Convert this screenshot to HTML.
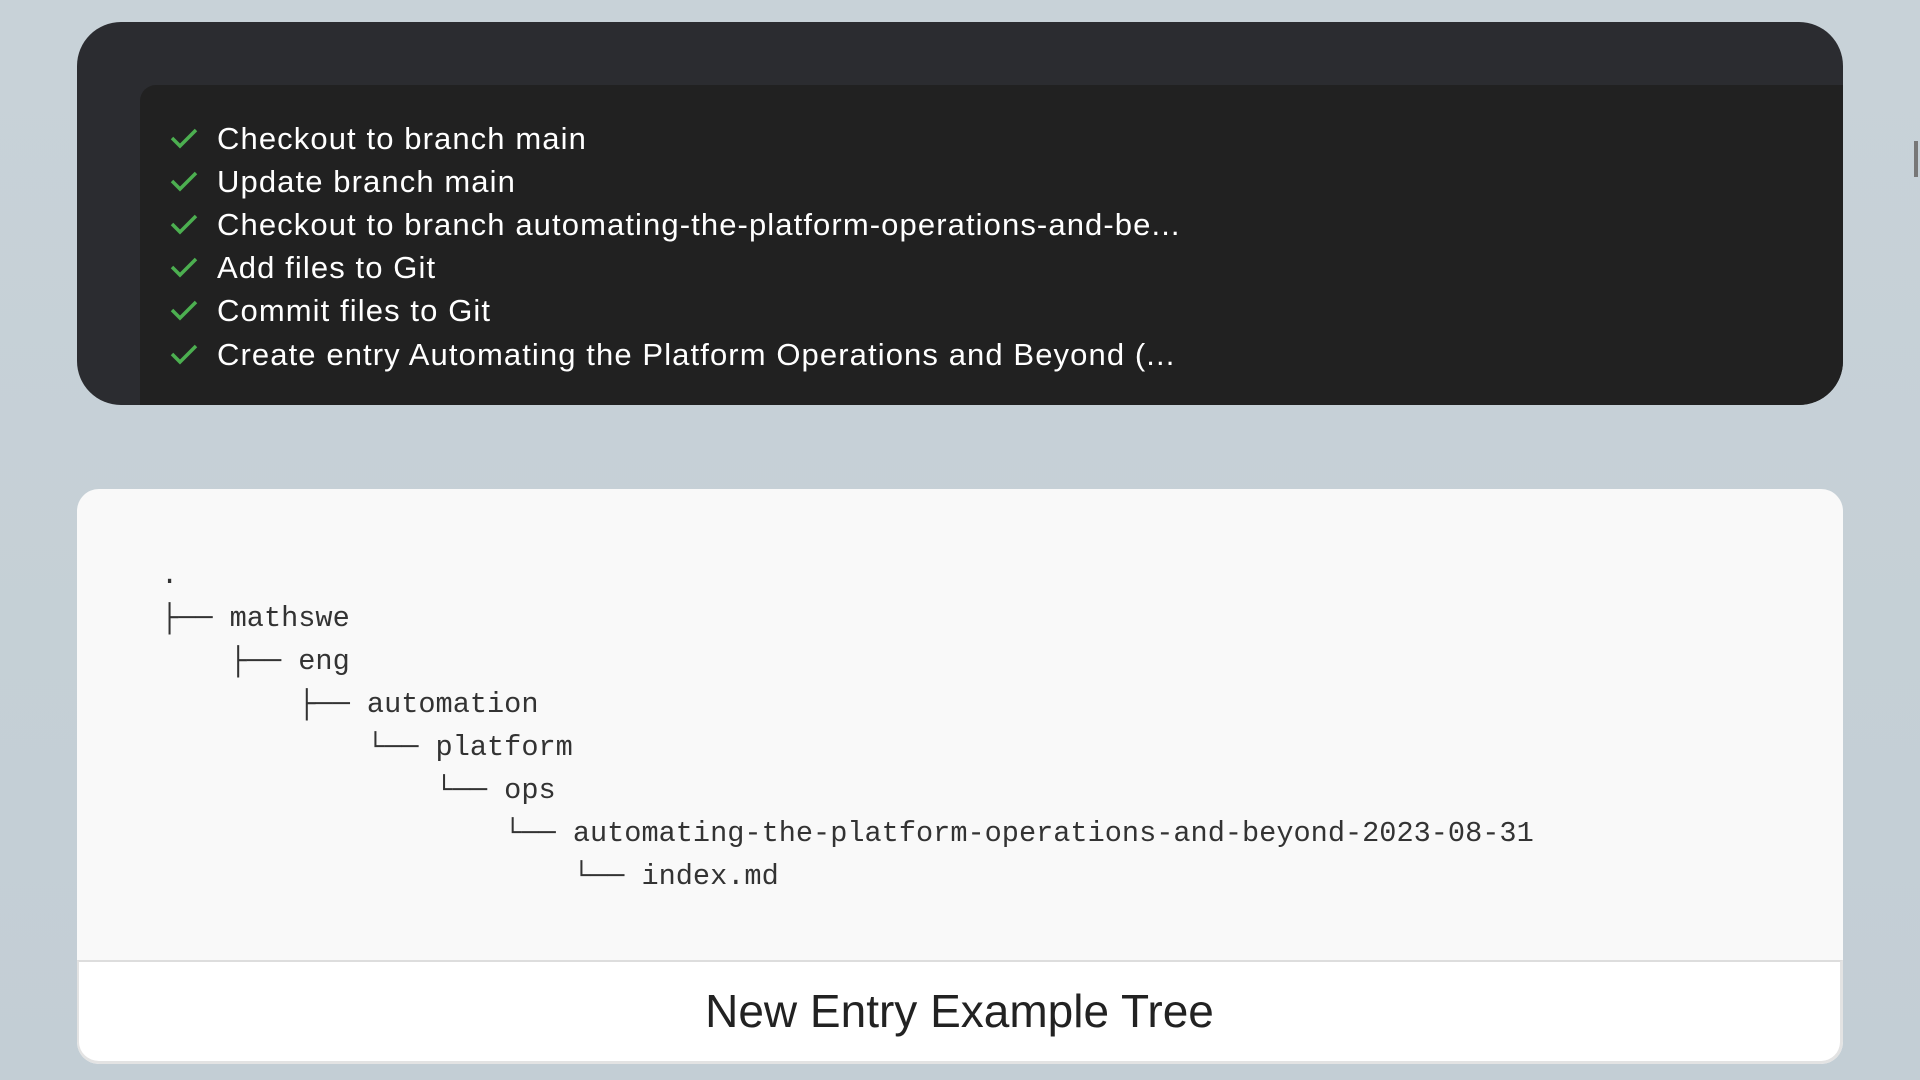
<!DOCTYPE html>
<html><head><meta charset="utf-8"><style>
html,body{margin:0;padding:0;width:1920px;height:1080px;overflow:hidden;background:linear-gradient(#c8d2d8,#c3ced5);font-family:"Liberation Sans",sans-serif;}
.dark{position:absolute;left:77px;top:22px;width:1766px;height:383px;background:#2b2c30;border-radius:44px;overflow:hidden;}
.inner{position:absolute;left:63px;top:63px;right:0;bottom:0;background:#212121;border-top-left-radius:16px;}
.row{position:absolute;left:0;height:43px;line-height:43px;color:#fff;font-size:31px;letter-spacing:1.1px;white-space:nowrap;}
.row svg{position:absolute;left:29px;top:10px;}
.row span{position:absolute;left:77px;}
.light{position:absolute;left:77px;top:489px;width:1766px;height:575px;background:#f9f9f9;border-radius:22px;overflow:hidden;}
pre{position:absolute;left:84px;top:65px;margin:0;font-family:"Liberation Mono","DejaVu Sans Mono",monospace;font-size:28.6px;line-height:43px;color:#333;}
.foot{position:absolute;left:0;right:0;top:471px;bottom:0;background:#fff;border-top:2px solid #ddd;border-left:2px solid #e3e3e3;border-right:3px solid #e3e3e3;border-bottom:3px solid #e3e3e3;border-radius:0 0 22px 22px;box-sizing:border-box;text-align:center;font-size:46px;line-height:98px;color:#222;}
.sb{position:absolute;left:1914px;top:141px;width:4px;height:36px;background:#777;}
</style></head><body>
<div class="dark"><div class="inner">
<div class="row" style="top:32px"><svg width="30" height="22" viewBox="0 0 30 22"><path d="M3 11 L11 19 L27 3" fill="none" stroke="#4caf50" stroke-width="3.5"/></svg><span>Checkout to branch main</span></div>
<div class="row" style="top:75px"><svg width="30" height="22" viewBox="0 0 30 22"><path d="M3 11 L11 19 L27 3" fill="none" stroke="#4caf50" stroke-width="3.5"/></svg><span>Update branch main</span></div>
<div class="row" style="top:118px"><svg width="30" height="22" viewBox="0 0 30 22"><path d="M3 11 L11 19 L27 3" fill="none" stroke="#4caf50" stroke-width="3.5"/></svg><span>Checkout to branch automating-the-platform-operations-and-be...</span></div>
<div class="row" style="top:161px"><svg width="30" height="22" viewBox="0 0 30 22"><path d="M3 11 L11 19 L27 3" fill="none" stroke="#4caf50" stroke-width="3.5"/></svg><span>Add files to Git</span></div>
<div class="row" style="top:204px"><svg width="30" height="22" viewBox="0 0 30 22"><path d="M3 11 L11 19 L27 3" fill="none" stroke="#4caf50" stroke-width="3.5"/></svg><span>Commit files to Git</span></div>
<div class="row" style="top:248px"><svg width="30" height="22" viewBox="0 0 30 22"><path d="M3 11 L11 19 L27 3" fill="none" stroke="#4caf50" stroke-width="3.5"/></svg><span>Create entry Automating the Platform Operations and Beyond (...</span></div>
</div></div>
<div class="light">
<pre>.
├── mathswe
    ├── eng
        ├── automation
            └── platform
                └── ops
                    └── automating-the-platform-operations-and-beyond-2023-08-31
                        └── index.md</pre>
<div class="foot">New Entry Example Tree</div>
</div>
<div class="sb"></div>
</body></html>
